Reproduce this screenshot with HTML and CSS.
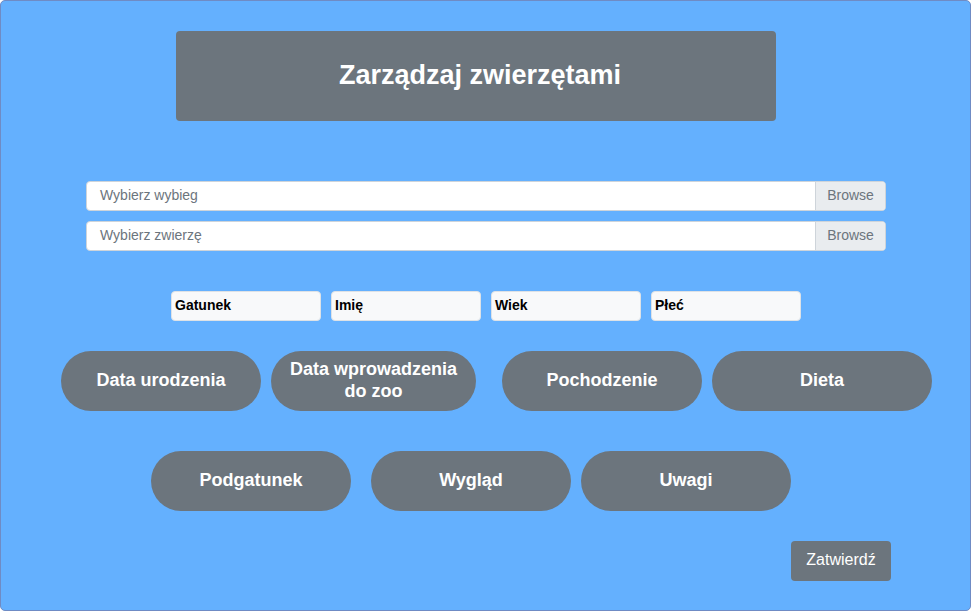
FILE: index.html
```html
<!DOCTYPE html>
<html lang="pl">
<head>
<meta charset="utf-8">
<title>Zarządzaj zwierzętami</title>
<link rel="stylesheet" href="styles.css">
</head>
<body>
<div class="page">
  <div class="header"><h1>Zarządzaj zwierzętami</h1></div>
  <div class="files">
    <div class="file"><span class="file-label">Wybierz wybieg</span><span class="browse">Browse</span></div>
    <div class="file"><span class="file-label">Wybierz zwierzę</span><span class="browse">Browse</span></div>
  </div>
  <div class="fields">
    <div class="field">Gatunek</div>
    <div class="field">Imię</div>
    <div class="field">Wiek</div>
    <div class="field">Płeć</div>
  </div>
  <div class="pills row1">
    <button class="pill w200">Data urodzenia</button>
    <button class="pill w205 gap10">Data wprowadzenia do zoo</button>
    <button class="pill w200 gap26">Pochodzenie</button>
    <button class="pill w220 gap10">Dieta</button>
  </div>
  <div class="pills row2">
    <button class="pill w200">Podgatunek</button>
    <button class="pill w200 gap20">Wygląd</button>
    <button class="pill w210 gap10">Uwagi</button>
  </div>
  <div class="actions"><button class="submit">Zatwierdź</button></div>
</div>
</body>
</html>
```

FILE: styles.css
```css
* { box-sizing: border-box; }
html, body { margin: 0; padding: 0; }
body { font-family: "Liberation Sans", Arial, sans-serif; }
.page {
  width: 971px;
  height: 611px;
  background: #64b0fe;
  border: 1px solid #6f8bc4;
  border-radius: 5px;
  display: flex;
  flex-direction: column;
}
.header {
  margin: 30px 0 0 175px;
  width: 600px;
  height: 90px;
  background: #6c757d;
  border-radius: 4px;
  display: flex;
  align-items: center;
  justify-content: center;
  padding-left: 8px;
}
.header h1 {
  margin: 0 0 1px 0;
  color: #fff;
  font-size: 27px;
  font-weight: bold;
}
.files {
  margin: 60px 0 0 85px;
  width: 800px;
  display: flex;
  flex-direction: column;
  gap: 10px;
}
.file {
  height: 30px;
  background: #fff;
  border: 1px solid #ced4da;
  border-radius: 4px;
  display: flex;
  overflow: hidden;
}
.file-label {
  flex: 1;
  padding-left: 13px;
  line-height: 27px;
  font-size: 14px;
  color: #6c757d;
}
.browse {
  width: 70px;
  background: #e9ecef;
  border-left: 1px solid #ced4da;
  line-height: 27px;
  font-size: 14px;
  color: #6c757d;
  text-align: center;
}
.fields {
  margin: 40px 0 0 170px;
  display: flex;
  gap: 10px;
}
.field {
  width: 150px;
  height: 30px;
  background: #f8f9fa;
  border: 1px solid #dee2e6;
  border-radius: 4px;
  padding-left: 3px;
  line-height: 27px;
  font-size: 14px;
  font-weight: bold;
  color: #000;
}
.pills { display: flex; }
.row1 { margin: 30px 0 0 60px; }
.row2 { margin: 40px 0 0 150px; }
.pill {
  height: 60px;
  border: none;
  border-radius: 30px;
  background: #6c757d;
  color: #fff;
  font-family: "Liberation Sans", Arial, sans-serif;
  font-size: 18px;
  font-weight: bold;
  line-height: 22px;
  padding: 0 12px 2px;
}
.w200 { width: 200px; }
.w205 { width: 205px; }
.w210 { width: 210px; }
.w220 { width: 220px; }
.gap10 { margin-left: 10px; }
.gap20 { margin-left: 20px; }
.gap26 { margin-left: 26px; }
.actions { margin: 30px 0 0 790px; }
.submit {
  width: 100px;
  height: 40px;
  border: none;
  border-radius: 4px;
  background: #6c757d;
  color: #fff;
  font-family: "Liberation Sans", Arial, sans-serif;
  font-size: 16px;
  padding: 0 0 2px;
}
```
